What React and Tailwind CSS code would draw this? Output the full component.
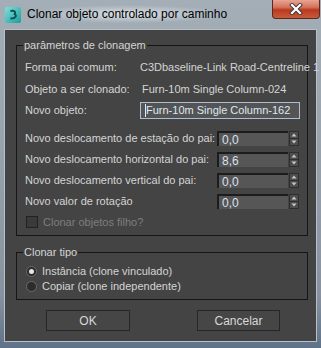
import React, { useState } from "react";

const FONT = { fontFamily: '"Liberation Sans", Arial, sans-serif' };

function Spinner({ value }) {
    return (
        <div className="flex h-[15px] items-stretch">
            <div className="flex w-[71px] items-center border-t-2 border-l-2 border-t-[#1c1c1c] border-l-[#1c1c1c] bg-[#565656] pl-[3px] text-[12px] leading-none text-[#d6e0f0]">
                {value}
            </div>
            <div className="ml-[1px] flex w-[10px] flex-col border border-[#2e2e2e] bg-[#4e4e4e]">
                <svg viewBox="0 0 8 6" className="h-[6px] w-[8px]">
                    <path d="M4 1.5 L6.5 4.5 L1.5 4.5 Z" fill="#c8c8c8" />
                </svg>
                <div className="h-[1px] bg-[#2e2e2e]" />
                <svg viewBox="0 0 8 6" className="h-[6px] w-[8px]">
                    <path d="M1.5 1.5 L6.5 1.5 L4 4.5 Z" fill="#c8c8c8" />
                </svg>
            </div>
        </div>
    );
}

function Group({ title, children, className }) {
    return (
        <div className={"relative ml-[11px] w-[292px] border border-[#151515] " + className}>
            <span className="absolute -top-[8px] left-[6px] bg-[#444444] px-[1px] text-[11px] leading-[14px] text-[#d4d4d4]">
                {title}
            </span>
            {children}
        </div>
    );
}

function Radio({ checked, label, onClick }) {
    return (
        <div className="flex h-[14px] cursor-default items-center pl-[9px]" onClick={onClick}>
            <div className="flex h-[11px] w-[11px] items-center justify-center rounded-full border border-[#6a6a6a] bg-[#2c2c2c]">
                {checked && <div className="h-[5px] w-[5px] rounded-full bg-[#e6e6e6]" />}
            </div>
            <span className="ml-[5px] text-[11px] text-[#d4d4d4]">{label}</span>
        </div>
    );
}

export default function App() {
    const [instance, setInstance] = useState(true);
    const [cloneChildren, setCloneChildren] = useState(false);

    const spinners = [
        ["Novo deslocamento de estação do pai:", "0,0"],
        ["Novo deslocamento horizontal do pai:", "8,6"],
        ["Novo deslocamento vertical do pai:", "0,0"],
        ["Novo valor de rotação", "0,0"],
    ];

    return (
        <div
            className="flex h-[348px] w-[321px] flex-col overflow-hidden bg-[linear-gradient(180deg,#a4aeb7_0%,#98a3ad_40%,#8792a0_85%,#5f7288_100%)] px-[4px] pb-[6px]"
            style={FONT}
        >
            {/* barra de título */}
            <div className="relative flex h-[29px] shrink-0 items-center">
                <div className="ml-[1px] flex h-[16px] w-[16px] items-center justify-center rounded-[2px] bg-[linear-gradient(135deg,#7fe0da,#1b9c9a)]">
                    <svg viewBox="0 0 16 16" className="h-[14px] w-[14px]">
                        <path d="M5 3.5 C9 2.5 11.5 4 10 7 C12.5 8 11.5 12.5 5 12" fill="none" stroke="#0d4f58" strokeWidth="2.2" />
                    </svg>
                </div>
                <span className="ml-[6px] -mt-[1px] rounded-full bg-[radial-gradient(closest-side,rgba(235,240,244,0.75),rgba(235,240,244,0))] px-[0px] text-[12px] text-black">
                    Clonar objeto controlado por caminho
                </span>
                <div className="absolute -right-[3px] top-0 flex h-[19px] w-[48px] items-center justify-center rounded-b-[4px] border border-t-0 border-[#5a2a22] bg-[linear-gradient(180deg,#e9a492_0%,#d5735c_40%,#b83a1f_55%,#c95a3a_100%)]">
                    <svg viewBox="0 0 14 12" className="h-[12px] w-[14px]">
                        <path d="M3 2 L11 10 M11 2 L3 10" stroke="#3a3a3a" strokeWidth="4" strokeLinecap="square" />
                        <path d="M3 2 L11 10 M11 2 L3 10" stroke="#ffffff" strokeWidth="2.2" strokeLinecap="square" />
                    </svg>
                </div>
            </div>

            {/* área do cliente */}
            <div className="flex flex-1 flex-col border border-[#b7c0c8] bg-[#444444] pt-[15px]">
                <Group title="parâmetros de clonagem" className="flex flex-col pl-[8px] pt-[13px] pb-[6px]">
                    <div className="flex h-[16px] items-center whitespace-nowrap text-[11px] text-[#d4d4d4]">
                        <span className="w-[115px] shrink-0">Forma pai comum:</span>
                        <span>C3Dbaseline-Link Road-Centreline 1</span>
                    </div>
                    <div className="mt-[6px] flex h-[16px] items-center whitespace-nowrap text-[11px] text-[#d4d4d4]">
                        <span className="w-[117px] shrink-0">Objeto a ser clonado:</span>
                        <span>Furn-10m Single Column-024</span>
                    </div>
                    <div className="mt-[5px] flex h-[17px] items-center whitespace-nowrap text-[11px] text-[#d4d4d4]">
                        <span className="w-[115px] shrink-0">Novo objeto:</span>
                        <div className="flex h-[17px] w-[160px] items-center border border-[#a9bed4] bg-[#545454] pl-[4px] text-[11px] text-[#dfe8f5]">
                            <span className="h-[13px] w-[1px] bg-[#dfe8f5]" />
                            Furn-10m Single Column-162
                        </div>
                    </div>
                    <div className="mt-[12px] flex flex-col gap-[6px]">
                        {spinners.map(([label, value]) => (
                            <div key={label} className="flex h-[15px] items-center whitespace-nowrap text-[11px] text-[#d4d4d4]">
                                <span className="w-[192px] shrink-0">{label}</span>
                                <Spinner value={value} />
                            </div>
                        ))}
                    </div>
                    <div
                        className="mt-[6px] flex h-[14px] cursor-default items-center pl-[1px]"
                        onClick={() => setCloneChildren(!cloneChildren)}
                    >
                        <div className="flex h-[12px] w-[12px] items-center justify-center border border-[#222222] bg-[#3a3a3a] text-[10px] leading-none text-[#e0e0e0]">
                            {cloneChildren ? "✓" : ""}
                        </div>
                        <span className="ml-[5px] text-[11px] text-[#7e7e7e]">Clonar objetos filho?</span>
                    </div>
                </Group>

                <Group title="Clonar tipo" className="mt-[16px] flex flex-col gap-[1px] pt-[11px] pb-[6px]">
                    <Radio checked={instance} label="Instância (clone vinculado)" onClick={() => setInstance(true)} />
                    <Radio checked={!instance} label="Copiar (clone independente)" onClick={() => setInstance(false)} />
                </Group>

                <div className="mt-[10px] flex pl-[41px]">
                    <button className="h-[21px] w-[84px] border border-[#262626] bg-[#464646] text-[12px] text-[#d8d8d8]">
                        OK
                    </button>
                    <button className="ml-[67px] h-[21px] w-[83px] border border-[#262626] bg-[#464646] text-[12px] text-[#d8d8d8]">
                        Cancelar
                    </button>
                </div>
            </div>
        </div>
    );
}
